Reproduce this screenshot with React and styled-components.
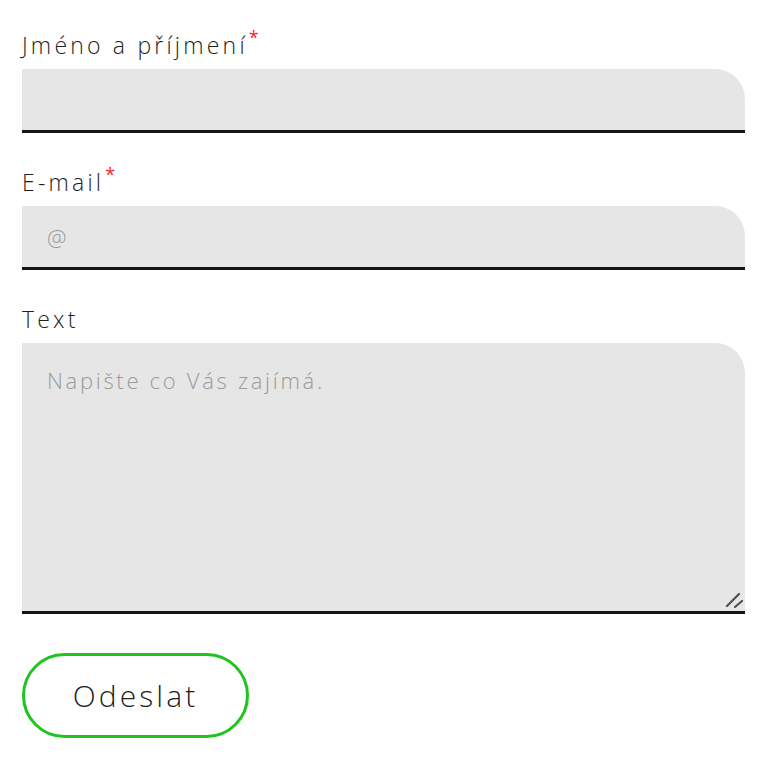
import React from 'react';
import styled, { createGlobalStyle } from 'styled-components';

const GlobalStyle = createGlobalStyle`
  body {
    margin: 0;
    background: #fff;
    font-family: "Open Sans", "Noto Sans", "Liberation Sans", sans-serif;
    color: #1a1a1a;
  }
`;

// === Styled Components ===

const Form = styled.form`
  width: 768px;
  box-sizing: border-box;
  padding: 32px 23px 0 22px;
  display: flex;
  flex-direction: column;
`;

const Field = styled.div`
  display: flex;
  flex-direction: column;
  gap: 11px;
  margin-bottom: 36px;
`;

const Label = styled.label`
  font-size: 23px;
  line-height: 26px;
  height: 26px;
  font-weight: 300;
  letter-spacing: 3.2px;
  color: #1e1e1e;
`;

const Required = styled.span`
  color: #ff1a1a;
  font-size: 18px;
  font-weight: 400;
  letter-spacing: 0;
  position: relative;
  top: -10px;
  margin-left: 1px;
`;

const fieldBase = `
  box-sizing: border-box;
  width: 100%;
  border: none;
  border-bottom: 3px solid #151515;
  border-top-right-radius: 30px;
  background: #e6e6e6;
  font-family: "Open Sans", "Noto Sans", sans-serif;
  font-size: 22px;
  font-weight: 300;
  letter-spacing: 2.7px;
  color: #1e1e1e;
  padding: 0 25px;
  outline: none;
  &::placeholder {
    color: #9a9a9a;
  }
`;

const Input = styled.input`
  ${fieldBase}
  height: 64px;
`;

const AreaWrap = styled.div`
  position: relative;
`;

const TextArea = styled.textarea`
  ${fieldBase}
  height: 271px;
  padding-top: 22px;
  resize: none;
  display: block;
`;

// grip drawn over the textarea corner
const Grip = styled.svg`
  position: absolute;
  right: 2px;
  bottom: 6px;
  width: 18px;
  height: 16px;
  pointer-events: none;
`;

const SubmitButton = styled.button`
  margin-top: 3px;
  width: 227px;
  height: 85px;
  box-sizing: border-box;
  border: 3px solid #1ec51e;
  border-radius: 43px;
  background: #fff;
  font-family: "Open Sans", "Noto Sans", sans-serif;
  font-size: 30px;
  font-weight: 300;
  letter-spacing: 3.1px;
  color: #1e1e1e;
  cursor: pointer;
`;

const App = () => {
  return (
    <>
      <GlobalStyle />
      <Form onSubmit={(e) => e.preventDefault()}>
        <Field>
          <Label htmlFor="name">
            Jméno a příjmení<Required>*</Required>
          </Label>
          <Input id="name" type="text" />
        </Field>

        <Field>
          <Label htmlFor="email">
            E-mail<Required>*</Required>
          </Label>
          <Input id="email" type="email" placeholder="@" />
        </Field>

        <Field>
          <Label htmlFor="text">Text</Label>
          <AreaWrap>
            <TextArea id="text" placeholder="Napište co Vás zajímá." />
            <Grip viewBox="0 0 18 16">
              <path d="M2 14 L14 2 M10 15 L17 9" stroke="#505050" strokeWidth="2.2" strokeLinecap="round" fill="none" />
            </Grip>
          </AreaWrap>
        </Field>

        <div>
          <SubmitButton type="submit">Odeslat</SubmitButton>
        </div>
      </Form>
    </>
  );
};

export default App;
